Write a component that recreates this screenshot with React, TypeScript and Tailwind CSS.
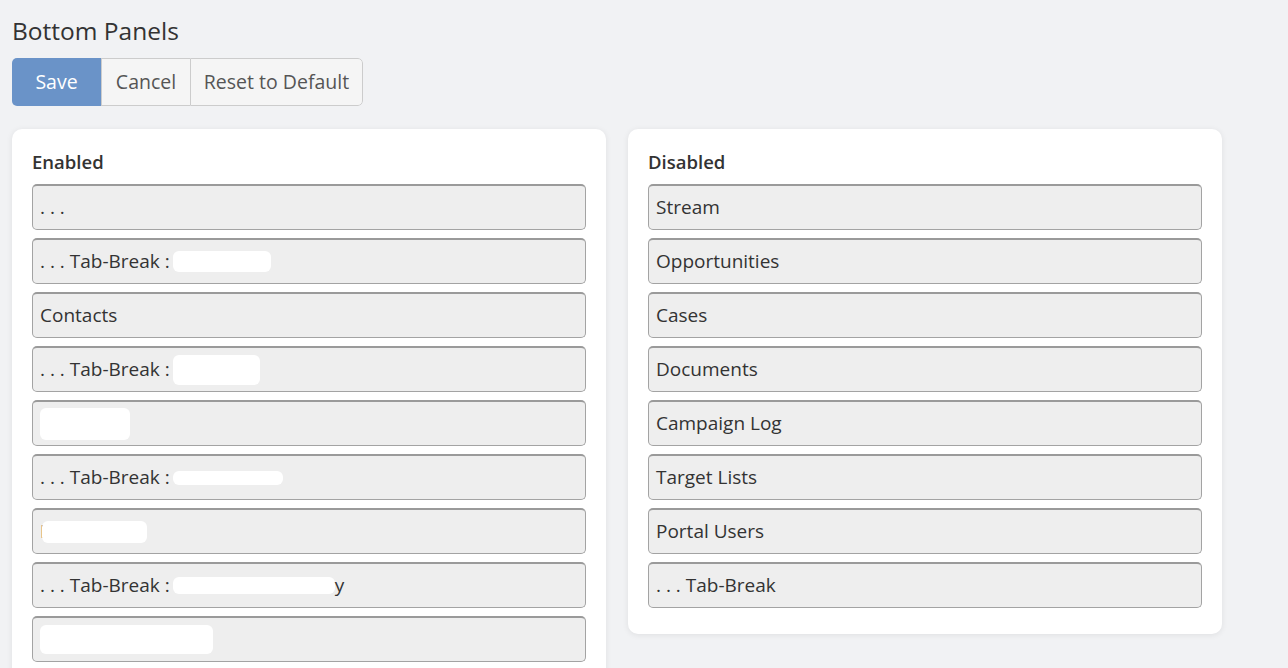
import React from "react";

type Item = { label?: string; blob?: { w: number; h: number; tight?: boolean }; suffix?: string };

const enabled: Item[] = [
  { label: ". . ." },
  { label: ". . . Tab-Break :", blob: { w: 98, h: 21 } },
  { label: "Contacts" },
  { label: ". . . Tab-Break :", blob: { w: 87, h: 30 } },
  { blob: { w: 90, h: 32 } },
  { label: ". . . Tab-Break :", blob: { w: 110, h: 14 } },
  { label: "F", blob: { w: 105, h: 22, tight: true } },
  { label: ". . . Tab-Break :", blob: { w: 162, h: 17 }, suffix: "y" },
  { blob: { w: 173, h: 29 } },
];

const disabled: Item[] = [
  { label: "Stream" },
  { label: "Opportunities" },
  { label: "Cases" },
  { label: "Documents" },
  { label: "Campaign Log" },
  { label: "Target Lists" },
  { label: "Portal Users" },
  { label: ". . . Tab-Break" },
];

function Row({ item }: { item: Item }) {
  return (
    <div className="h-[46px] flex items-center px-[7px] bg-[#eeeeee] border border-[#a3a3a3] border-t-2 border-t-[#9a9a9a] rounded-[5px] text-[19px] text-[#333]">
      {item.label && <span className="whitespace-pre">{item.label}</span>}
      {item.blob && (
        <span
          className={`inline-block bg-white rounded-[6px] ${item.label ? (item.blob.tight ? "-ml-[8px]" : "ml-[3px]") : ""}`}
          style={{ width: item.blob.w, height: item.blob.h }}
        />
      )}
      {item.suffix && <span>{item.suffix}</span>}
    </div>
  );
}

function Panel({ title, items }: { title: string; items: Item[] }) {
  return (
    <div className="w-[594px] bg-white rounded-[10px] shadow-[0_1px_6px_rgba(0,0,0,0.08)] px-5 pt-[20px] pb-[26px]">
      <p className="text-[18.5px] font-semibold text-[#333] leading-[26px] mb-[9px]">{title}</p>
      <div className="flex flex-col gap-2">
        {items.map((it, i) => (
          <Row key={i} item={it} />
        ))}
      </div>
    </div>
  );
}

export default function App() {
  return (
    <div
      className="bg-[#f1f2f4] pl-3 pt-[16px] overflow-hidden h-[668px]"
      style={{ fontFamily: '"Open Sans", "Liberation Sans", sans-serif' }}
    >
      <h1 className="text-[24.5px] text-[#333] leading-[30px]">Bottom Panels</h1>
      <div className="mt-[12px] flex w-fit rounded-[5px] overflow-hidden text-[19.5px]">
        <button className="w-[89px] h-[48px] bg-[#6a93c8] text-white">Save</button>
        <button className="w-[89px] h-[48px] bg-[#f5f5f5] text-[#555] border-y border-l border-[#cccccc]">
          Cancel
        </button>
        <button className="w-[173px] h-[48px] bg-[#f5f5f5] text-[#555] border border-[#cccccc] rounded-r-[5px]">
          Reset to Default
        </button>
      </div>
      <div className="mt-[23px] flex items-start gap-[22px]">
        <Panel title="Enabled" items={enabled} />
        <Panel title="Disabled" items={disabled} />
      </div>
    </div>
  );
}
